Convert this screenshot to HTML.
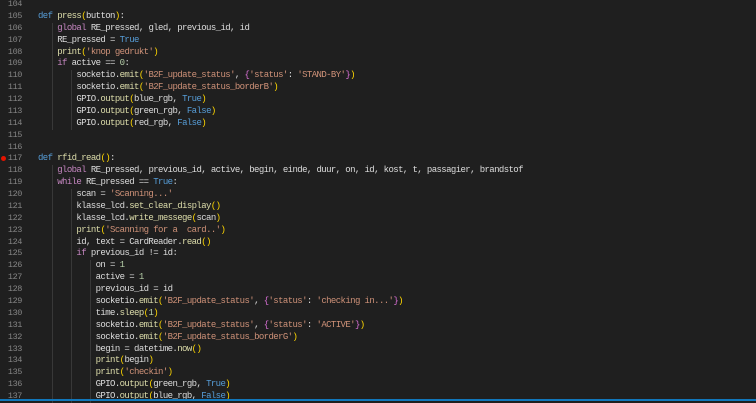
<!DOCTYPE html>
<html><head><meta charset="utf-8"><style>
html,body{margin:0;padding:0;}
body{width:756px;height:401px;background:#1f1f1f;overflow:hidden;position:relative;font-family:"Liberation Mono",monospace;font-size:9px;}
.ln{position:absolute;left:0;width:22px;text-align:right;color:#858585;white-space:pre;font-size:8.5px;letter-spacing:-0.4px;}
.c{position:absolute;left:38px;color:#dcdcdc;white-space:pre;letter-spacing:-0.6px;}
.k{color:#569cd6}.p{color:#c586c0}.s{color:#ce9178}.f{color:#dcdcaa}.y{color:#ffd700}.m{color:#da70d6}.n{color:#b5cea8}
.g{position:absolute;width:1px;background:#383838;}
</style></head><body>
<div id="w"></div>
<div style="position:absolute;left:1px;top:156px;width:5px;height:5px;border-radius:50%;background:#e51400"></div>
<div style="position:absolute;left:0;top:399px;width:756px;height:2px;background:#1177bb"></div>
<script>
var L=[
"",
'<span class="k">def</span> <span class="f">press</span><span class="y">(</span>button<span class="y">)</span>:',
'    <span class="p">global</span> RE_pressed, gled, previous_id, id',
'    RE_pressed = <span class="k">True</span>',
'    <span class="f">print</span><span class="y">(</span><span class="s">\'knop gedrukt\'</span><span class="y">)</span>',
'    <span class="p">if</span> active == <span class="n">0</span>:',
'        socketio.<span class="f">emit</span><span class="y">(</span><span class="s">\'B2F_update_status\'</span>, <span class="m">{</span><span class="s">\'status\'</span>: <span class="s">\'STAND-BY\'</span><span class="m">}</span><span class="y">)</span>',
'        socketio.<span class="f">emit</span><span class="y">(</span><span class="s">\'B2F_update_status_borderB\'</span><span class="y">)</span>',
'        GPIO.<span class="f">output</span><span class="y">(</span>blue_rgb, <span class="k">True</span><span class="y">)</span>',
'        GPIO.<span class="f">output</span><span class="y">(</span>green_rgb, <span class="k">False</span><span class="y">)</span>',
'        GPIO.<span class="f">output</span><span class="y">(</span>red_rgb, <span class="k">False</span><span class="y">)</span>',
"","",
'<span class="k">def</span> <span class="f">rfid_read</span><span class="y">()</span>:',
'    <span class="p">global</span> RE_pressed, previous_id, active, begin, einde, duur, on, id, kost, t, passagier, brandstof',
'    <span class="p">while</span> RE_pressed == <span class="k">True</span>:',
'        scan = <span class="s">\'Scanning...\'</span>',
'        klasse_lcd.<span class="f">set_clear_display</span><span class="y">()</span>',
'        klasse_lcd.<span class="f">write_messege</span><span class="y">(</span>scan<span class="y">)</span>',
'        <span class="f">print</span><span class="y">(</span><span class="s">\'Scanning for a  card..\'</span><span class="y">)</span>',
'        id, text = CardReader.<span class="f">read</span><span class="y">()</span>',
'        <span class="p">if</span> previous_id != id:',
'            on = <span class="n">1</span>',
'            active = <span class="n">1</span>',
'            previous_id = id',
'            socketio.<span class="f">emit</span><span class="y">(</span><span class="s">\'B2F_update_status\'</span>, <span class="m">{</span><span class="s">\'status\'</span>: <span class="s">\'checking in...\'</span><span class="m">}</span><span class="y">)</span>',
'            time.<span class="f">sleep</span><span class="y">(</span><span class="n">1</span><span class="y">)</span>',
'            socketio.<span class="f">emit</span><span class="y">(</span><span class="s">\'B2F_update_status\'</span>, <span class="m">{</span><span class="s">\'status\'</span>: <span class="s">\'ACTIVE\'</span><span class="m">}</span><span class="y">)</span>',
'            socketio.<span class="f">emit</span><span class="y">(</span><span class="s">\'B2F_update_status_borderG\'</span><span class="y">)</span>',
'            begin = datetime.<span class="f">now</span><span class="y">()</span>',
'            <span class="f">print</span><span class="y">(</span>begin<span class="y">)</span>',
'            <span class="f">print</span><span class="y">(</span><span class="s">\'checkin\'</span><span class="y">)</span>',
'            GPIO.<span class="f">output</span><span class="y">(</span>green_rgb, <span class="k">True</span><span class="y">)</span>',
'            GPIO.<span class="f">output</span><span class="y">(</span>blue_rgb, <span class="k">False</span><span class="y">)</span>'
];
var lh=11.88,h='';
for(var i=0;i<L.length;i++){
 var t=-1+i*lh;
 h+='<div class="ln" style="top:'+t+'px;line-height:'+lh+'px">'+(104+i)+'</div>';
 h+='<div class="c" style="top:'+t+'px;line-height:'+lh+'px">'+L[i]+'</div>';
 var m=L[i].match(/^ */)[0].length/4;
 for(var g=0;g<m;g++){h+='<div class="g" style="left:'+(52+19*g)+'px;top:'+t+'px;height:'+lh+'px"></div>';}
}
document.getElementById('w').innerHTML=h;
</script>
</body></html>
